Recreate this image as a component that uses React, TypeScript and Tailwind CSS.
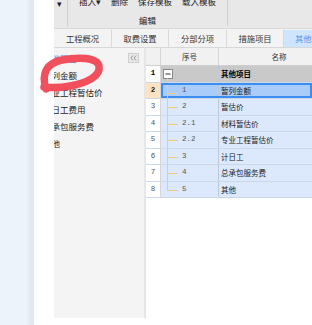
import React from 'react';

const cjk = { fontFamily: '"Noto Sans CJK SC", "Noto Sans", sans-serif' };
const mono = { fontFamily: '"Liberation Mono", "Noto Sans CJK SC", monospace' };

const tabs = [
  { label: '工程概况', w: 'w-[58px]' },
  { label: '取费设置', w: 'w-[57px]' },
  { label: '分部分项', w: 'w-[58px]' },
  { label: '措施项目', w: 'w-[57px]' },
];

const sideItems = ['其他项目', '暂列金额', '专业工程暂估价', '计日工费用', '总承包服务费', '其他'];

const rows = [
  { n: '1', code: '', name: '其他项目', kind: 'root' },
  { n: '2', code: '1', name: '暂列金额', kind: 'sel' },
  { n: '3', code: '2', name: '暂估价', kind: 'item' },
  { n: '4', code: '2.1', name: '材料暂估价', kind: 'item' },
  { n: '5', code: '2.2', name: '专业工程暂估价', kind: 'item' },
  { n: '6', code: '3', name: '计日工', kind: 'item' },
  { n: '7', code: '4', name: '总承包服务费', kind: 'item' },
  { n: '8', code: '5', name: '其他', kind: 'last' },
];

function TreeLines({ kind }: { kind: string }) {
  if (kind === 'root') {
    return (
      <svg width="58" height="16.5" className="absolute left-0 top-0">
        <rect x="2.5" y="3.5" width="9" height="9" fill="#fff" stroke="#8a8a8a" />
        <line x1="4.5" y1="8" x2="9.5" y2="8" stroke="#333" strokeWidth="1" />
        <line x1="6.5" y1="12.5" x2="6.5" y2="16.5" stroke="#f2c990" />
      </svg>
    );
  }
  return (
    <svg width="58" height="16.5" className="absolute left-0 top-0">
      <line x1="6.5" y1="0" x2="6.5" y2={kind === 'last' ? 8.5 : 16.5} stroke="#f2c990" />
      <line x1="6.5" y1="8.5" x2="17" y2="8.5" stroke="#f2c990" />
    </svg>
  );
}

export default function App() {
  return (
    <div className="relative flex h-[325px] w-[312px] overflow-hidden bg-white" style={cjk}>
      {/* desktop strip */}
      <div className="flex h-full w-[34px] shrink-0">
        <div className="h-full w-[27px] bg-[#edf3fb]" />
        <div className="h-full w-[7px] bg-gradient-to-r from-[#e8eef6] to-[#dfe5ee]" />
      </div>
      <div className="h-full w-[20px] shrink-0 bg-white" />

      <div className="flex h-full w-[258px] shrink-0 flex-col">
        {/* ribbon */}
        <div className="flex h-[28px] shrink-0 bg-[#e8e8e8] text-[8.5px] text-[#222]">
          <div className="h-[26px] w-[14px] shrink-0 border-r border-[#cfcfcf] pl-[3px] leading-[6px]">▾</div>
          <div className="flex h-[26px] w-[160px] shrink-0 flex-col items-center border-r border-[#cfcfcf]">
            <div className="-mt-[3px] flex h-[9px] items-center gap-[10px] leading-[9px]">
              <span>插入▾</span>
              <span>删除</span>
              <span>保存模板</span>
              <span>载入模板</span>
            </div>
            <div className="mt-[10px] leading-[9px]">编辑</div>
          </div>
        </div>

        {/* tabs */}
        <div className="flex h-[20px] shrink-0 border-y border-[#d8d8d8] bg-[#f3f3f3] pt-[1px] text-[8.3px] text-[#333]">
          {tabs.map((t) => (
            <div key={t.label} className={`${t.w} flex shrink-0 items-center justify-center border-r border-[#dadada]`}>
              {t.label}
            </div>
          ))}
          <div className="flex flex-1 items-center bg-[#cfe5ff] pl-[11px] text-[#4f97ee]">其他</div>
        </div>

        {/* body */}
        <div className="flex flex-1">
          <div className="relative h-[270px] w-[92px] shrink-0 overflow-hidden border-r-2 border-[#e6e6e6] bg-[#f4f4f4] text-[8.5px] text-[#222]">
            <div className="absolute left-[74px] top-[5px] flex h-[10px] w-[11px] items-center justify-center border border-[#cfcfcf] bg-[#e9e9e9]">
              <svg width="7" height="6" viewBox="0 0 7 6">
                <path d="M3 0.5 L0.8 3 L3 5.5 M6.2 0.5 L4 3 L6.2 5.5" fill="none" stroke="#8a8a8a" strokeWidth="0.9" />
              </svg>
            </div>
            <div className="-ml-[11px] pt-[1px]">
              {sideItems.map((s, i) => (
                <div
                  key={s}
                  className={`whitespace-nowrap ${i === 0 ? 'h-[18px] leading-[18px] text-[#3d86e0]' : 'h-[17px] leading-[17px]'}`}
                >
                  {s}
                </div>
              ))}
            </div>
          </div>

          {/* grid */}
          <div className="w-[166px] shrink-0 overflow-hidden text-[7.5px]">
            <div className="flex h-[18px] border-b border-[#cfcfcf] bg-[#f1f1f1] text-[#333]">
              <div className="w-[15px] shrink-0 border-r border-[#d6d6d6]" />
              <div className="flex w-[58px] shrink-0 items-center justify-center border-r border-[#d6d6d6]">序号</div>
              <div className="flex w-[120px] shrink-0 items-center justify-center">名称</div>
            </div>
            {rows.map((r) => (
              <div key={r.n} className="flex h-[16.5px] border-b border-[#ccd7e7]">
                <div
                  className={`flex w-[15px] shrink-0 items-center justify-center border-r border-[#d6d6d6] ${
                    r.kind === 'sel'
                      ? 'bg-[#fde3c2] font-bold text-[#222]'
                      : r.kind === 'root'
                        ? 'bg-white font-bold text-black'
                        : 'bg-white text-[#555]'
                  }`}
                  style={mono}
                >
                  {r.n}
                </div>
                <div
                  className={`flex flex-1 ${
                    r.kind === 'root'
                      ? 'bg-[#c9c9c9]'
                      : r.kind === 'sel'
                        ? 'border-2 border-[#3b8ef0] bg-[#a9cdf8]'
                        : 'bg-[#dce9fc]'
                  }`}
                >
                  <div
                    className={`relative flex shrink-0 items-center border-r border-[#bcc8da] pl-[21px] text-[#555] ${
                      r.kind === 'sel' ? '-ml-[2px] w-[58px]' : 'w-[58px]'
                    }`}
                    style={mono}
                  >
                    <TreeLines kind={r.kind} />
                    <span className="relative">{r.code}</span>
                  </div>
                  <div
                    className={`flex items-center whitespace-nowrap pl-[2px] ${
                      r.kind === 'root' ? 'font-bold text-black' : 'text-[#222]'
                    }`}
                  >
                    {r.name}
                  </div>
                </div>
              </div>
            ))}
          </div>
        </div>
      </div>

      {/* red marker scribble */}
      <svg width="312" height="325" className="pointer-events-none absolute left-0 top-0">
        <path
          d="M 46 89 C 41 73, 47 63, 62 60 C 78 57, 97 57, 99 66 C 101 76, 87 83, 70 86 C 60 88, 52 88, 44 87"
          fill="none"
          stroke="#f24f5d"
          strokeWidth="7.5"
          strokeLinecap="round"
        />
      </svg>
    </div>
  );
}
